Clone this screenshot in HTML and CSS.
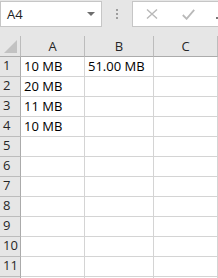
FILE: index.html
```html
<!DOCTYPE html>
<html lang="en">
<head>
    <meta charset="UTF-8">
    <title>Sheet</title>
    <link rel="stylesheet" href="styles.css">
</head>
<body>
    <div class="formula-bar">
        <div class="name-box">
            <span class="name-box-text">A4</span>
            <svg class="name-box-arrow" width="8" height="4" viewBox="0 0 8 4"><path d="M0 0H8L4 4Z" fill="#6e6e6e"/></svg>
        </div>
        <div class="grip">
            <span></span><span></span><span></span>
        </div>
        <div class="formula-box">
            <svg class="fb-icon" width="12" height="10" viewBox="0 0 12 10"><path d="M1 0.5L11 9.5M11 0.5L1 9.5" stroke="#b9b9b9" stroke-width="1.4" fill="none"/></svg>
            <svg class="fb-icon check" width="13" height="11" viewBox="0 0 13 11"><path d="M0.8 6L4.6 9.8L12.2 0.8" stroke="#b9b9b9" stroke-width="1.8" fill="none"/></svg>
            <span class="fx-dot"></span>
        </div>
    </div>

    <div class="sheet">
        <div class="corner">
            <svg width="13" height="13" viewBox="0 0 13 13"><path d="M13 0V13H0Z" fill="#c2c2c2"/></svg>
        </div>
        <div class="col-head">A</div>
        <div class="col-head">B</div>
        <div class="col-head">C</div>

        <div class="row-head">1</div><div class="cell">10 MB</div><div class="cell">51.00 MB</div><div class="cell"></div>
        <div class="row-head">2</div><div class="cell">20 MB</div><div class="cell"></div><div class="cell"></div>
        <div class="row-head">3</div><div class="cell">11 MB</div><div class="cell"></div><div class="cell"></div>
        <div class="row-head">4</div><div class="cell">10 MB</div><div class="cell"></div><div class="cell"></div>
        <div class="row-head">5</div><div class="cell"></div><div class="cell"></div><div class="cell"></div>
        <div class="row-head">6</div><div class="cell"></div><div class="cell"></div><div class="cell"></div>
        <div class="row-head">7</div><div class="cell"></div><div class="cell"></div><div class="cell"></div>
        <div class="row-head">8</div><div class="cell"></div><div class="cell"></div><div class="cell"></div>
        <div class="row-head">9</div><div class="cell"></div><div class="cell"></div><div class="cell"></div>
        <div class="row-head">10</div><div class="cell"></div><div class="cell"></div><div class="cell"></div>
        <div class="row-head">11</div><div class="cell"></div><div class="cell"></div><div class="cell"></div>
        <div class="row-head"></div><div class="cell"></div><div class="cell"></div><div class="cell"></div>
    </div>
</body>
</html>
```

FILE: styles.css
```css
body, html {
    margin: 0;
    padding: 0;
}

body {
    width: 218px;
    height: 278px;
    overflow: hidden;
    background-color: #e6e6e6;
    font-family: "Open Sans", Arial, sans-serif;
    color: #000;
}

.formula-bar {
    display: flex;
    align-items: flex-start;
    height: 36px;
    padding-top: 1px;
    box-sizing: border-box;
}

.name-box {
    display: flex;
    align-items: center;
    justify-content: space-between;
    width: 102px;
    height: 26px;
    box-sizing: border-box;
    background-color: #fff;
    border: 1px solid #c6c6c6;
    padding: 0 6px 0 6px;
}

.name-box-text {
    font-size: 13px;
    color: #222;
}

.name-box-arrow {
    margin-top: -1px;
}

.grip {
    display: flex;
    flex-direction: column;
    gap: 2px;
    width: 30px;
    height: 26px;
    align-items: center;
    justify-content: center;
}

.grip span {
    width: 2px;
    height: 2px;
    background-color: #9e9e9e;
}

.formula-box {
    display: flex;
    align-items: center;
    flex: 1;
    height: 26px;
    box-sizing: border-box;
    background-color: #fff;
    border: 1px solid #c6c6c6;
    border-right: none;
    padding-left: 13px;
}

.fb-icon.check {
    margin-left: 24px;
}

.fx-dot {
    width: 2px;
    height: 2px;
    margin-left: auto;
    margin-top: 8px;
    background-color: #777;
}

.sheet {
    display: grid;
    grid-template-columns: 21px 64px 69px 64px;
    grid-auto-rows: 20px;
    grid-template-rows: 21px;
    background-color: #fff;
}

.corner,
.col-head,
.row-head,
.cell {
    box-sizing: border-box;
    font-size: 13px;
    line-height: 1;
}

.corner {
    background-color: #e6e6e6;
    border-right: 1px solid #bcbcbc;
    border-bottom: 1px solid #ababab;
    display: flex;
    align-items: flex-end;
    justify-content: flex-end;
    padding: 0 3px 3px 0;
}

.col-head {
    background-color: #e6e6e6;
    border-right: 1px solid #bcbcbc;
    border-bottom: 1px solid #ababab;
    color: #262626;
    display: flex;
    align-items: center;
    justify-content: center;
    padding-top: 1px;
}

.row-head {
    background-color: #e6e6e6;
    border-right: 1px solid #ababab;
    border-bottom: 1px solid #bcbcbc;
    color: #262626;
    display: flex;
    align-items: flex-end;
    padding: 0 0 4px 3px;
}

.cell {
    border-right: 1px solid #d4d4d4;
    border-bottom: 1px solid #d4d4d4;
    display: flex;
    align-items: flex-end;
    padding: 0 0 3px 3px;
    white-space: nowrap;
}
```
